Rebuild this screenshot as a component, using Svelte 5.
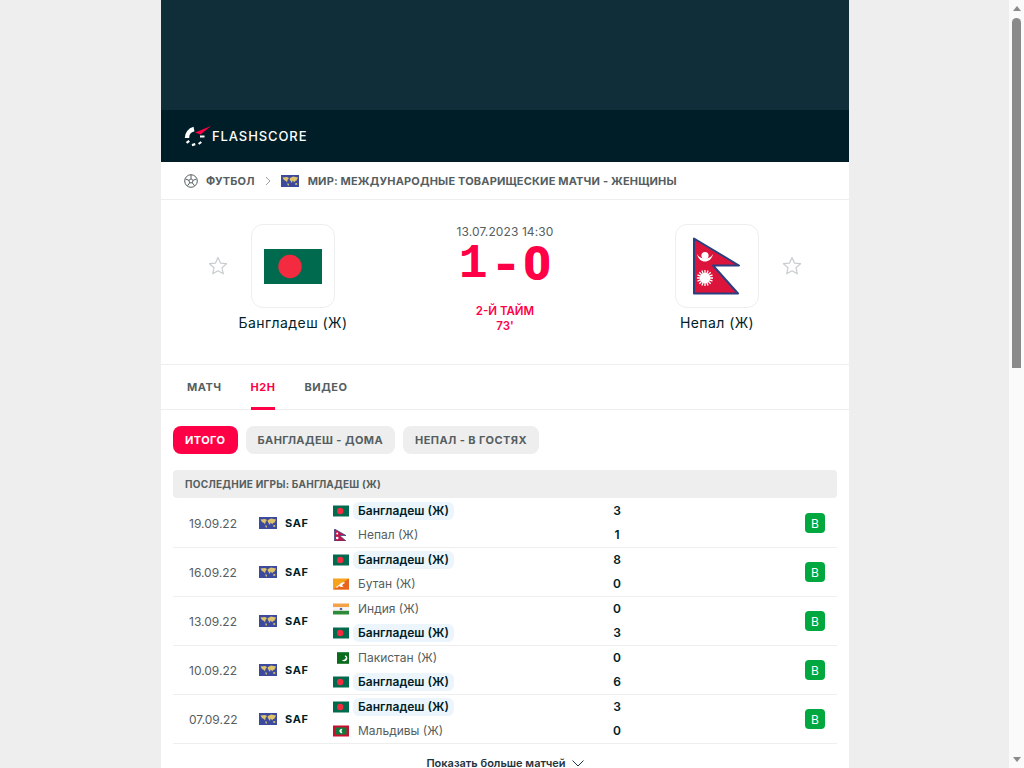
<script lang="ts">
	type Team = { name: string; flag: string; score: number; win?: boolean };
	type Match = { date: string; home: Team; away: Team };

	const bgd = (score: number): Team => ({ name: 'Бангладеш (Ж)', flag: 'bd', score, win: true });

	const matches: Match[] = [
		{ date: '19.09.22', home: bgd(3), away: { name: 'Непал (Ж)', flag: 'np', score: 1 } },
		{ date: '16.09.22', home: bgd(8), away: { name: 'Бутан (Ж)', flag: 'bt', score: 0 } },
		{ date: '13.09.22', home: { name: 'Индия (Ж)', flag: 'in', score: 0 }, away: bgd(3) },
		{ date: '10.09.22', home: { name: 'Пакистан (Ж)', flag: 'pk', score: 0 }, away: bgd(6) },
		{ date: '07.09.22', home: bgd(3), away: { name: 'Мальдивы (Ж)', flag: 'mv', score: 0 } }
	];

	const filters = ['Итого', 'Бангладеш - дома', 'Непал - в гостях'];
	const tabs = ['Матч', 'H2H', 'Видео'];
</script>

{#snippet world()}
	<svg class="world" viewBox="0 0 18 12">
		<rect width="18" height="12" fill="#3c4a9e" />
		<path d="M1.500 2.500L6 2l2 1-1.500 2L6 7.500 5 6 3 5zM6.500 8l1.500 1-.5 2-1-1z" fill="#dfc36a" />
		<path d="M9 3l3-1.500 5 1-1.500 3-2 1 .5 1-1.500-1-1-1-.5 2.500L9.500 6 8.500 4z" fill="#dfc36a" />
		<path d="M14 8.500l2-.5.5 1.500-2 .5z" fill="#dfc36a" />
	</svg>
{/snippet}

{#snippet star()}
	<svg class="star" viewBox="0 0 20 20">
		<path d="M10 1.500l2.500 5.600 6 .6-4.500 4.100 1.300 6-5.300-3.100-5.300 3.100 1.300-6L1.500 7.700l6-.6z" fill="none" stroke="#c8cdcf" stroke-width="1.200" stroke-linejoin="round" />
	</svg>
{/snippet}

{#snippet flag(code: string)}
	<svg class="flag" viewBox="0 0 16 12">
		{#if code === 'bd'}
			<rect y="0.500" width="16" height="11" fill="#006a4e" />
			<circle cx="7.200" cy="6" r="3.200" fill="#f42a41" />
		{:else if code === 'np'}
			<path d="M1.500 0L13 6.500H6.500L13 12H1.500z" fill="#c0174a" stroke="#2a3f80" stroke-width="0.700" />
			<circle cx="4.200" cy="9" r="1.300" fill="#fff" />
			<circle cx="4.200" cy="4.500" r="1" fill="#fff" />
		{:else if code === 'bt'}
			<rect y="0.500" width="16" height="11" fill="#f7a21b" />
			<path d="M0 11.500L16 .5V11.500z" fill="#e8641e" />
			<path d="M3 9l3-2 2-2 3-1 1 1-2 1-1 2 2 1-3 0-2-1-2 2z" fill="#fff" />
		{:else if code === 'in'}
			<rect y="0.500" width="16" height="3.700" fill="#f4a24a" />
			<rect y="4.200" width="16" height="3.600" fill="#f4f4f4" />
			<rect y="7.800" width="16" height="3.700" fill="#2e8b3a" />
			<circle cx="8" cy="6" r="1.300" fill="#5a5f9c" />
		{:else if code === 'pk'}
			<rect x="4" y="0.200" width="12" height="11.600" fill="#0b6b1d" />
			<path d="M12.500 3.500a3 3 0 1 1-3.800 4.200 3 3 0 0 0 3.800-4.200z" fill="#fff" />
			<circle cx="12.600" cy="4.300" r="0.800" fill="#fff" />
		{:else if code === 'mv'}
			<rect y="0.500" width="16" height="11" fill="#c8102e" />
			<rect x="2.500" y="2.500" width="11" height="7" fill="#0f7a3d" />
			<path d="M9.500 4a2.200 2.200 0 1 0 0 4 2.600 2.600 0 0 1 0-4z" fill="#fff" />
		{/if}
	</svg>
{/snippet}

<div class="shell">
	<main class="page">
		<div class="banner"></div>
		<header class="topbar">
			<svg class="logo" viewBox="0 0 28 22">
				<path d="M3 13A9 9 0 0 1 10 4" fill="none" stroke="#fff" stroke-width="4.400" />
				<path d="M3.200 16l1.400 1.800M9.300 18.500l.6 2.300M15.300 17.200l1.300 1.600" fill="none" stroke="#fff" stroke-width="3.400" />
				<path d="M11 7.500L27 1 16.500 9.500z" fill="#ff0046" />
				<path d="M16 11.500h4.500" stroke="#fff" stroke-width="2" />
			</svg>
			<span class="wordmark">FLASHSCORE</span>
		</header>

		<nav class="crumbs">
			<svg class="ball" viewBox="0 0 14 14">
				<circle cx="7" cy="7" r="6.300" fill="none" stroke="#555e61" stroke-width="1" />
				<path d="M7 4.800l2.100 1.500-.8 2.500H5.700l-.8-2.500zM7 4.800V1M9.100 6.300l3.400-1.300M8.300 8.800l2.200 3M5.700 8.800l-2.200 3M4.900 6.300L1.500 5" fill="none" stroke="#555e61" stroke-width="1" />
			</svg>
			<span class="crumb">Футбол</span>
			<svg class="sep" viewBox="0 0 6 10"><path d="M1 1l4 4-4 4" fill="none" stroke="#9aa3a6" stroke-width="1" /></svg>
			{@render world()}
			<span class="crumb">Мир: Международные товарищеские матчи - Женщины</span>
		</nav>

		<section class="match">
			<div class="team">
				<div class="team-star">{@render star()}</div>
				<div class="team-col">
					<div class="crest">
						<svg class="hero-bd" viewBox="0 0 58 35">
							<rect width="58" height="35" fill="#006a4e" />
							<circle cx="26" cy="17.500" r="11.700" fill="#f42a41" />
						</svg>
					</div>
					<div class="team-name">Бангладеш (Ж)</div>
				</div>
			</div>

			<div class="center">
				<div class="kickoff">13.07.2023 14:30</div>
				<div class="score"><span class="one">1</span><span class="dash">-</span><span class="zero">0</span></div>
				<div class="status">2-й тайм</div>
				<div class="minute">73'</div>
			</div>

			<div class="team">
				<div class="team-col">
					<div class="crest">
						<svg class="hero-np" viewBox="0 0 48 58">
							<path d="M1 1.500L46 28.500H20L45 56.500H1z" fill="#dc143c" stroke="#2a3f80" stroke-width="2" stroke-linejoin="round" />
							<path d="M4 17C6 27 18 27 20 17 17 23 7 23 4 17z" fill="#fff" />
							<circle cx="12" cy="18.500" r="3.600" fill="#fff" />
							<circle cx="12" cy="41" r="5.200" fill="#fff" />
							<path d="M12 33v16M4 41h16M6.300 35.300l11.400 11.400M17.700 35.300L6.300 46.700M8.900 33.500l6.200 15M15.100 33.500l-6.200 15M4.500 37.900l15 6.200M19.500 37.900l-15 6.200" stroke="#fff" stroke-width="1.300" />
						</svg>
					</div>
					<div class="team-name">Непал (Ж)</div>
				</div>
				<div class="team-star">{@render star()}</div>
			</div>
		</section>

		<div class="tabs">
			{#each tabs as tab (tab)}
				<a class="tab" class:active={tab === 'H2H'} href="#top">{tab}</a>
			{/each}
		</div>

		<div class="filters">
			{#each filters as f, i (f)}
				<button class="pill" class:on={i === 0}>{f}</button>
			{/each}
		</div>

		<section class="h2h">
			<div class="h2h-head">Последние игры: Бангладеш (Ж)</div>
			{#each matches as m (m.date)}
				<div class="row">
					<span class="date">{m.date}</span>
					<span class="league">{@render world()}<b>SAF</b></span>
					<div class="teams">
						{#each [m.home, m.away] as t (t.name)}
							<div class="line">
								{@render flag(t.flag)}
								<span class="name" class:winner={t.win}>{t.name}</span>
							</div>
						{/each}
					</div>
					<div class="scores">
						<span>{m.home.score}</span>
						<span>{m.away.score}</span>
					</div>
					<span class="badge">В</span>
				</div>
			{/each}
			<button class="more">
				Показать больше матчей
				<svg class="more-icon" viewBox="0 0 12 7"><path d="M.5.500L6 6 11.500.5" fill="none" stroke="#1f3540" stroke-width="1" /></svg>
			</button>
		</section>
	</main>

	<aside class="scrollbar">
		<i class="arrow up"></i>
		<div class="track"><div class="thumb"></div></div>
		<i class="arrow down"></i>
	</aside>
</div>

<style>
	:global(body) {
		margin: 0;
		overflow: hidden;
		background: #eeeeee;
	}

	.shell {
		display: flex;
		height: 768px;
		overflow: hidden;
		font-family: Inter, 'Noto Sans', sans-serif;
		color: #001e28;
	}

	.page {
		flex: none;
		width: 688px;
		height: 768px;
		margin-left: 161px;
		margin-right: 160px;
		background: #fff;
		overflow: hidden;
	}

	.banner {
		height: 110px;
		background: #102d3a;
	}

	.topbar {
		display: flex;
		align-items: center;
		height: 52px;
		padding-left: 23px;
		background: #001e28;
	}

	.logo {
		width: 28px;
		height: 22px;
	}

	.wordmark {
		color: #fff;
		font-size: 13px;
		font-weight: 500;
		letter-spacing: 0.9px;
	}

	.crumbs {
		display: flex;
		align-items: center;
		height: 37px;
		padding-left: 23px;
		border-bottom: 1px solid #eeeeee;
	}

	.ball {
		width: 14px;
		height: 14px;
		margin-right: 8px;
	}

	.crumb {
		font-size: 11px;
		font-weight: 700;
		letter-spacing: 0.17px;
		text-transform: uppercase;
		color: #555e61;
	}

	.sep {
		width: 6px;
		height: 10px;
		margin: 0 10px;
	}

	.crumbs .crumb:last-child {
		margin-left: 9px;
	}

	.world {
		flex: none;
		width: 18px;
		height: 12px;
	}

	.match {
		display: flex;
		justify-content: space-between;
		height: 165px;
		padding: 24px 47px 0;
		box-sizing: border-box;
		border-bottom: 1px solid #eeeeee;
	}

	.team {
		display: flex;
		gap: 23px;
	}

	.team-star {
		padding-top: 32px;
	}

	.star {
		display: block;
		width: 20px;
		height: 20px;
	}

	.team-col {
		display: flex;
		flex-direction: column;
		align-items: center;
		width: 84px;
		white-space: nowrap;
	}

	.crest {
		display: flex;
		align-items: center;
		justify-content: center;
		flex: none;
		width: 84px;
		height: 84px;
		box-sizing: border-box;
		border: 1px solid #eeeeee;
		border-radius: 12px;
	}

	.hero-bd {
		width: 58px;
		height: 35px;
	}

	.hero-np {
		width: 48px;
		height: 58px;
	}

	.team-name {
		margin-top: 7px;
		font-size: 14px;
		line-height: 16px;
		letter-spacing: 0.43px;
	}

	.center {
		display: flex;
		flex-direction: column;
		align-items: center;
		white-space: nowrap;
	}

	.kickoff {
		font-size: 12px;
		line-height: 16px;
		letter-spacing: 0.1px;
		color: #555e61;
	}

	.score {
		display: flex;
		align-items: center;
		height: 40px;
		margin-top: 4px;
		color: #ff0046;
		font-size: 48px;
		line-height: 40px;
		font-weight: 800;
	}

	.one {
		font-family: 'Liberation Mono', monospace;
		font-weight: 700;
	}

	.dash {
		margin: 0 6px 0 7px;
	}

	.zero {
		font-family: Roboto, sans-serif;
		font-weight: 900;
	}

	.status,
	.minute {
		font-size: 11.500px;
		line-height: 15px;
		font-weight: 600;
		color: #ff0046;
		text-transform: uppercase;
	}

	.status {
		margin-top: 20px;
	}

	.tabs {
		display: flex;
		gap: 29px;
		height: 45px;
		padding-left: 26px;
		box-sizing: border-box;
		border-bottom: 1px solid #eeeeee;
	}

	.tab {
		display: flex;
		align-items: center;
		height: 45px;
		padding-top: 1px;
		box-sizing: border-box;
		font-size: 11px;
		font-weight: 700;
		letter-spacing: 0.5px;
		text-transform: uppercase;
		color: #555e61;
		text-decoration: none;
		border-bottom: 3px solid transparent;
	}

	.tab.active {
		color: #ff0046;
		border-bottom-color: #ff0046;
	}

	.filters {
		display: flex;
		gap: 8px;
		padding: 16px 12px;
	}

	.pill {
		height: 28px;
		padding: 0 12px;
		border: 0;
		border-radius: 8px;
		background: #eeeeee;
		font-family: inherit;
		font-size: 11px;
		font-weight: 700;
		letter-spacing: 0.42px;
		text-transform: uppercase;
		color: #555e61;
	}

	.pill.on {
		background: #ff0046;
		color: #fff;
	}

	.h2h {
		padding: 0 12px;
	}

	.h2h-head {
		display: flex;
		align-items: center;
		height: 28px;
		margin-bottom: 1px;
		padding-left: 12px;
		border-radius: 4px;
		background: #eeeeee;
		font-size: 10px;
		font-weight: 700;
		letter-spacing: 0.23px;
		text-transform: uppercase;
		color: #555e61;
	}

	.row {
		display: grid;
		grid-template-columns: 70px 74px 274px 20px 1fr 20px;
		align-items: center;
		height: 49px;
		padding: 0 12px 0 16px;
		box-sizing: border-box;
		border-bottom: 1px solid #eeeeee;
	}

	.date {
		font-size: 12px;
		color: #555e61;
	}

	.league {
		display: flex;
		align-items: center;
		gap: 8px;
	}

	.league b {
		font-size: 11px;
		font-weight: 700;
		letter-spacing: 0.6px;
	}

	.teams {
		display: flex;
		flex-direction: column;
		gap: 6px;
	}

	.line {
		display: flex;
		align-items: center;
		height: 18px;
		gap: 4px;
	}

	.flag {
		flex: none;
		width: 16px;
		height: 12px;
	}

	.name {
		padding: 0 5px;
		font-size: 12px;
		line-height: 18px;
		color: #555e61;
		border-radius: 6px;
	}

	.name.winner {
		font-weight: 600;
		color: #001e28;
		background: #edf5fc;
	}

	.scores {
		display: flex;
		flex-direction: column;
		gap: 6px;
		grid-column: 4;
		font-size: 12px;
		line-height: 18px;
		font-weight: 600;
		text-align: center;
	}

	.badge {
		grid-column: 6;
		display: flex;
		align-items: center;
		justify-content: center;
		width: 20px;
		height: 20px;
		border-radius: 4px;
		background: #00a83f;
		color: #fff;
		font-size: 12px;
	}

	.more {
		display: flex;
		align-items: center;
		justify-content: center;
		gap: 6px;
		width: 100%;
		height: 38px;
		border: 0;
		background: none;
		font-family: inherit;
		font-size: 11px;
		line-height: 12px;
		font-weight: 600;
		color: #1f3540;
	}

	.more-icon {
		width: 12px;
		height: 7px;
	}

	.scrollbar {
		flex: none;
		display: flex;
		flex-direction: column;
		width: 15px;
		height: 768px;
		background: #fafafa;
	}

	.arrow {
		flex: none;
		height: 17px;
		display: flex;
		align-items: center;
		justify-content: center;
	}

	.arrow::before {
		content: '';
		border-left: 4px solid transparent;
		border-right: 4px solid transparent;
	}

	.arrow.up::before {
		border-bottom: 5px solid #8a8a8a;
	}

	.arrow.down::before {
		border-top: 5px solid #8a8a8a;
	}

	.track {
		flex: 1;
		padding: 1px 3px 0;
	}

	.thumb {
		height: 350px;
		border-radius: 5px 5px 0 0;
		background: #8a8a8a;
	}
</style>
